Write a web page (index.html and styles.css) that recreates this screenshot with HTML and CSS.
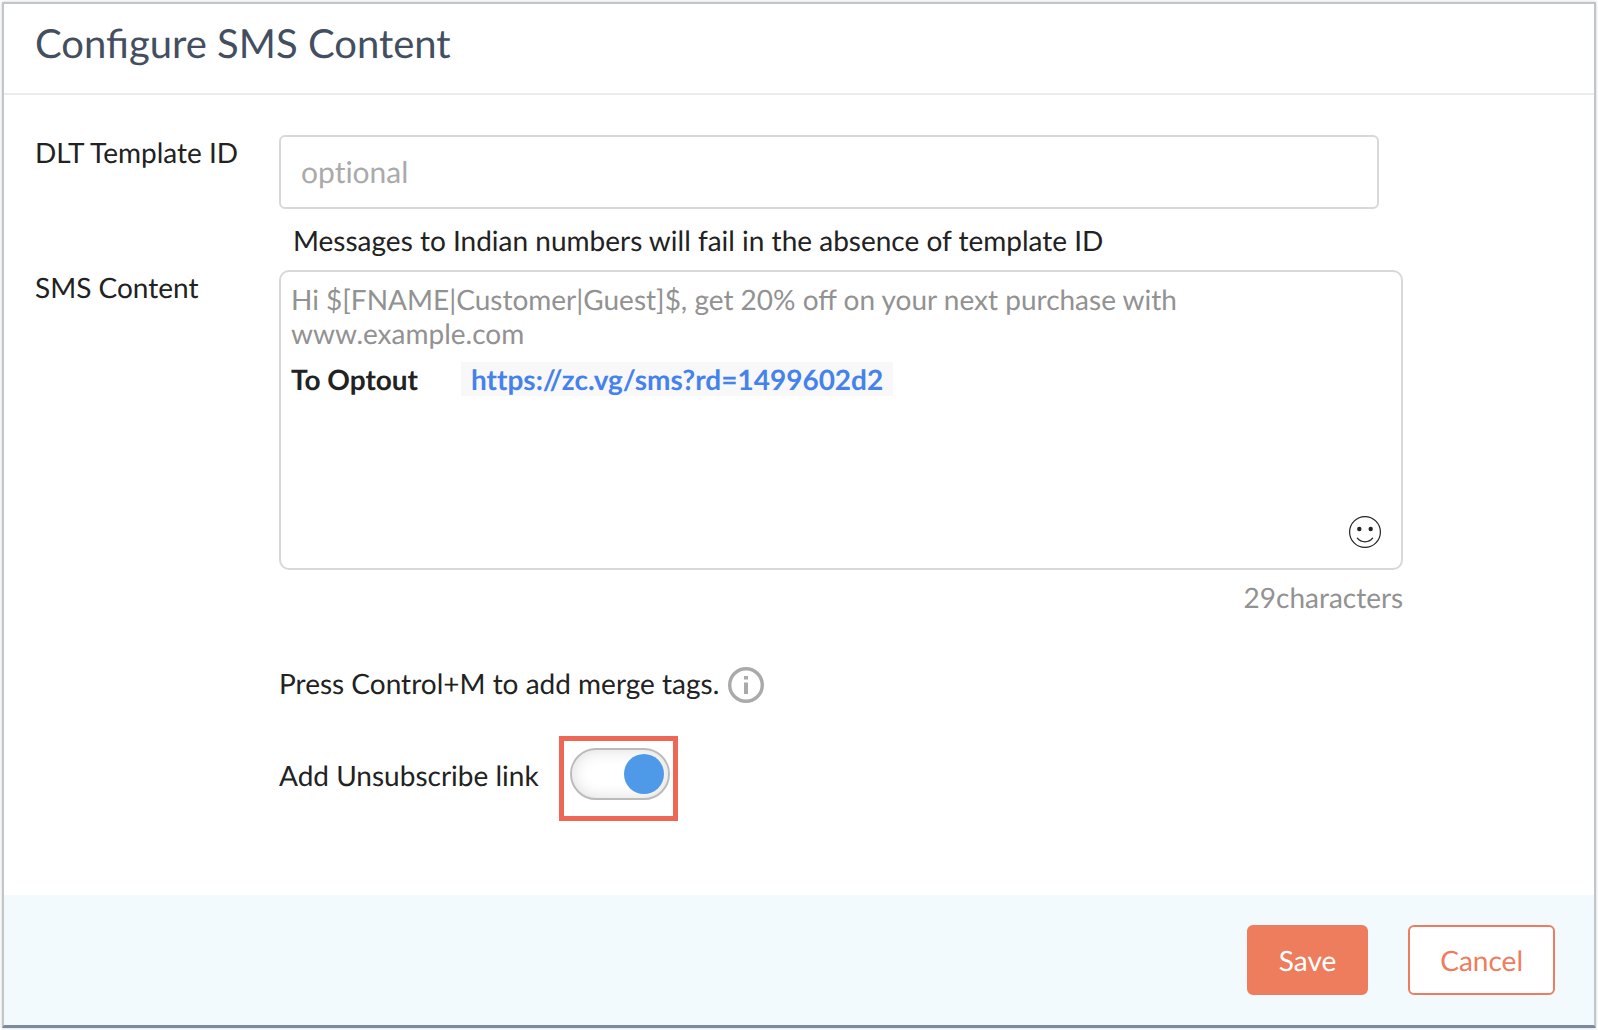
FILE: index.html
```html
<!DOCTYPE html>
<html lang="en">
<head>
  <meta charset="UTF-8">
  <meta name="viewport" content="width=device-width, initial-scale=1.0">
  <title>Configure SMS Content</title>
  <link rel="stylesheet" href="styles.css">
</head>
<body>
  <form class="dialog">
    <header class="dialog-header">
      <h1>Configure SMS Content</h1>
    </header>

    <main class="dialog-body">
      <label class="field-label" for="templateId">DLT Template ID</label>
      <div class="field">
        <input type="text" class="text-input" id="templateId" placeholder="optional">
        <p class="hint">Messages to Indian numbers will fail in the absence of template ID</p>
      </div>

      <label class="field-label" for="smsContent">SMS Content</label>
      <div class="field">
        <div class="editor">
          <textarea class="editor-text" id="smsContent" rows="2" placeholder="Hi $[FNAME|Customer|Guest]$, get 20% off on your next purchase with www.example.com"></textarea>
          <div class="optout">
            <span>To Optout</span>
            <a class="optout-link" href="https://zc.vg/sms?rd=1499602d2">https://zc.vg/sms?rd=1499602d2</a>
          </div>
          <button type="button" class="emoji-btn" aria-label="Insert emoji">
            <svg width="32" height="32" viewBox="0 0 32 32">
              <circle cx="16" cy="16" r="15.4" fill="none" stroke="#222" stroke-width="1.2"/>
              <circle cx="10.3" cy="13" r="2.2" fill="#222"/>
              <circle cx="21.7" cy="13" r="2.2" fill="#222"/>
              <path d="M8.4 22.2C12.4 27 19.6 27 23.6 22.2" fill="none" stroke="#222" stroke-width="1.3" stroke-linecap="round"/>
            </svg>
          </button>
        </div>
        <div class="counter">29characters</div>

        <div class="merge-tags">
          <span>Press Control+M to add merge tags.</span>
          <svg width="36" height="36" viewBox="0 0 36 36">
            <circle cx="18" cy="18" r="16.3" fill="none" stroke="#aaa" stroke-width="3.4"/>
            <path d="M16 9h4v3.5h-4zM16 15.5h4V27h-4z" fill="#aaa"/>
          </svg>
        </div>

        <div class="unsubscribe">
          <label for="unsubscribeLink">Add Unsubscribe link</label>
          <div class="highlight">
            <input type="checkbox" role="switch" class="toggle" id="unsubscribeLink" checked>
          </div>
        </div>
      </div>
    </main>

    <footer class="dialog-footer">
      <button type="button" class="btn btn-primary">Save</button>
      <button type="button" class="btn btn-outline">Cancel</button>
    </footer>
  </form>
</body>
</html>
```

FILE: styles.css
```css
* { box-sizing: border-box; }
body { margin: 0; padding: 2px; background: #fff; color: #222; font-family: Lato, sans-serif; font-size: 28px; line-height: 34px; text-rendering: geometricPrecision; }
input, textarea, button { font: inherit; text-rendering: inherit; }

.dialog { display: flex; flex-direction: column; min-height: calc(100vh - 4px); border: 2px solid #c0c6ca; border-bottom: 3px solid #7c8a9f; box-shadow: 0 0 3px rgba(0,0,0,0.2); }
.dialog-header { padding: 15px 31px 26px; border-bottom: 2px solid #ececec; }
.dialog-header h1 { margin: 0; font-size: 40px; line-height: 48px; font-weight: 400; color: #434f60; }

.dialog-body { flex: 1; display: grid; grid-template-columns: 244px 1fr; align-content: start; row-gap: 13px; padding: 40px 12% 40px 31px; }
.text-input { display: block; width: calc(100% - 24px); height: 74px; padding: 0 20px; border: 2px solid #d8d8d8; border-radius: 6px; background: #fff; color: #222; font-size: 30px; font-variant-ligatures: none; }
.text-input::placeholder { color: #aaa; opacity: 1; }
.hint { margin: 14px 0 0 14px; }

/* message box */
.editor { display: flex; flex-direction: column; min-height: 300px; padding: 10px; border: 2px solid #d8d8d8; border-radius: 10px; }
.editor-text { display: block; width: 100%; padding: 0; border: none; outline: none; resize: none; overflow: hidden; background: none; color: #222; line-height: 34px; }
.editor-text::placeholder { color: #929292; opacity: 1; }
.optout { display: flex; flex-wrap: wrap; gap: 43px; margin-top: 12px; font-weight: 700; }
.optout-link { padding: 0 10px; background: #f8f8f8; color: #4682ec; text-decoration: none; font-variant-ligatures: none; }
.emoji-btn { display: flex; align-self: flex-end; margin-top: auto; padding: 10px; border: none; background: none; cursor: pointer; }
.counter { margin-top: 10px; text-align: right; color: #929292; }

.merge-tags { display: flex; align-items: flex-end; gap: 9px; margin-top: 52px; }
.merge-tags span { padding-bottom: 3px; }
.unsubscribe { display: flex; align-items: center; gap: 20px; margin-top: 33px; }
.unsubscribe label { padding-bottom: 8px; }
.highlight { padding: 7px 3px 16px 6px; border: 5px solid #ee6655; }

/* switch */
.toggle { appearance: none; display: flex; align-items: center; width: 100px; height: 52px; margin: 0; padding: 4px; border: 2px solid #bbb; border-radius: 26px; background: #fff; box-shadow: inset 0 0 16px rgba(0,0,0,0.14); cursor: pointer; }
.toggle::before { content: ""; width: 40px; height: 40px; border-radius: 50%; background: #bbb; }
.toggle:checked::before { margin-left: auto; background: #4f9ae8; }

.dialog-footer { display: flex; justify-content: flex-end; gap: 40px; padding: 30px 39px; background: #f2fafd; }
.btn { height: 70px; padding: 0 30px; border: 2px solid #ed7d5d; border-radius: 6px; cursor: pointer; }
.btn-primary { background: #ed7d5d; color: #fff; }
.btn-outline { background: #fff; color: #ed7d5d; }
```
